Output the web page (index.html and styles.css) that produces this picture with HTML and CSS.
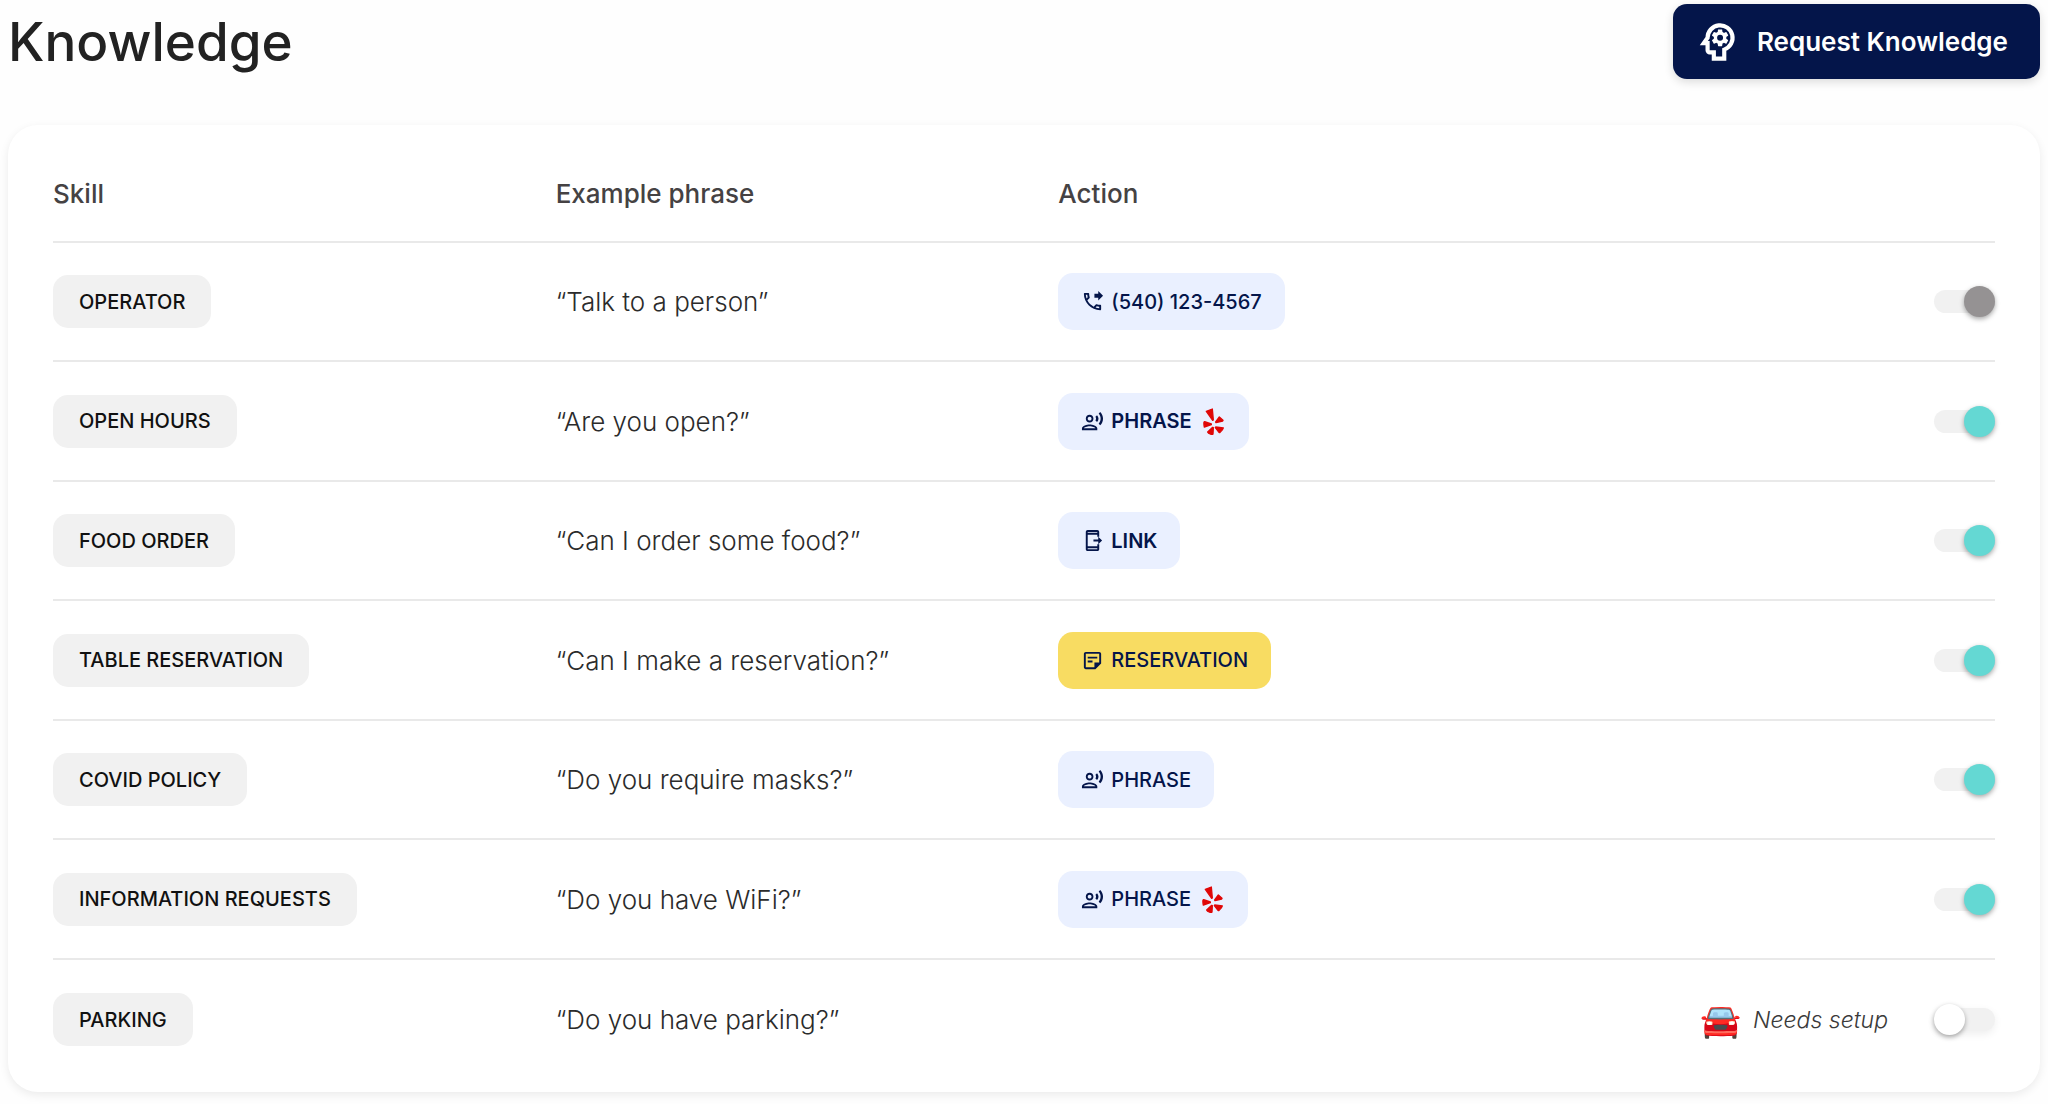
FILE: index.html
```html
<!DOCTYPE html>
<html lang="en">
<head>
    <meta charset="UTF-8">
    <meta name="viewport" content="width=device-width, initial-scale=1.0">
    <title>Knowledge</title>
    <link rel="stylesheet" href="styles.css">
</head>
<body>
    <!-- shared icons -->
    <svg class="sprite" aria-hidden="true">
        <symbol id="icon-forward" viewBox="0 0 24 24">
            <path d="M18 11l5-5-5-5v3h-4v4h4v3zM20 15.500c-1.250 0-2.450-.2-3.570-.57-.1-.03-.21-.05-.31-.05-.26 0-.51.1-.71.29l-2.200 2.200c-2.830-1.440-5.150-3.750-6.590-6.580l2.200-2.210c.28-.27.36-.66.25-1.010C8.700 6.450 8.500 5.250 8.500 4c0-.55-.45-1-1-1H4c-.55 0-1 .45-1 1 0 9.390 7.610 17 17 17 .55 0 1-.45 1-1v-3.500c0-.55-.45-1-1-1zM5.030 5h1.500c.07.88.22 1.750.46 2.590L5.790 8.800c-.41-1.210-.67-2.480-.76-3.800zM19 18.970c-1.320-.09-2.590-.35-3.800-.75l1.200-1.200c.85.24 1.720.39 2.600.45v1.500z"/>
        </symbol>
        <symbol id="icon-voice" viewBox="0 0 24 24">
            <path d="M9 13c2.210 0 4-1.790 4-4s-1.790-4-4-4-4 1.790-4 4 1.790 4 4 4zm0-6c1.100 0 2 .9 2 2s-.9 2-2 2-2-.9-2-2 .9-2 2-2zm0 8c-2.670 0-8 1.340-8 4v2h16v-2c0-2.660-5.330-4-8-4zm-6 4c.22-.72 3.310-2 6-2 2.700 0 5.800 1.290 6 2H3zM15.080 7.050c.84 1.180.84 2.710 0 3.890l1.680 1.690c2.020-2.020 2.020-5.070 0-7.270l-1.680 1.690zM20.070 2l-1.630 1.630c2.770 3.020 2.770 7.560 0 10.740L20.070 16c3.900-3.890 3.910-9.950 0-14z"/>
        </symbol>
        <symbol id="icon-mobile" viewBox="0 0 24 24">
            <path d="M17 18H7V6h10v2h2V3c0-1.100-.9-2-2-2H7c-1.100 0-2 .9-2 2v18c0 1.100.9 2 2 2h10c1.100 0 2-.9 2-2v-5h-2v2zm0 3H7v-1h10v1zM7 3h10v1H7V3zM22 12l-4-4v3h-5v2h5v3z"/>
        </symbol>
        <symbol id="icon-note" viewBox="0 0 24 24">
            <path d="M19 5v9h-5v5H5V5h14m0-2H5c-1.100 0-2 .9-2 2v14c0 1.100.9 2 2 2h10l6-6V5c0-1.100-.9-2-2-2zm-7 11H7v-2h5v2zm5-4H7V8h10v2z"/>
        </symbol>
        <symbol id="icon-yelp" viewBox="0 0 63 81">
            <path stroke-width="4" stroke-linejoin="round" d="M10 10L28 3L31 36L29 37ZM38 42L49 27L60 37L59 39L39 44ZM3 42Q2 49 4 57L25 50V48L5 41ZM38 57L61 60Q60 66 50 74L48 73L37 59ZM29 58L14 72Q15 77 28 80L30 78L31 59Z"/>
        </symbol>
    </svg>

    <div class="container">
        <header class="header">
            <h1>Knowledge</h1>
            <button class="button" type="button">
                <svg class="button-icon" viewBox="0 0 24 24" aria-hidden="true">
                    <path class="head" d="M10 20h5v-4.350A6 6 0 1 0 7 10L5.200 12.500H7V16a1 1 0 0 0 1 1h2z"/>
                    <path class="gear" fill-rule="evenodd" d="M13 8.570a1.430 1.430 0 1 0 0 2.860 1.430 1.430 0 0 0 0-2.860zM16 10c0 .13-.01.26-.02.39l.83.66c.08.06.1.16.05.25l-.8 1.390c-.05.09-.16.12-.24.09l-.99-.4c-.21.16-.43.29-.67.39L14 13.830c-.01.1-.1.17-.2.17h-1.600c-.1 0-.18-.07-.2-.17l-.15-1.060c-.25-.1-.47-.23-.68-.39l-.99.4c-.09.03-.2 0-.25-.09l-.8-1.390c-.05-.08-.03-.19.05-.25l.84-.66c-.01-.13-.02-.26-.02-.39s.02-.27.04-.39l-.85-.66c-.08-.06-.1-.16-.05-.26l.8-1.380c.05-.09.15-.12.24-.09l1 .4c.2-.15.43-.29.67-.39L12 6.170c.02-.1.1-.17.2-.17h1.600c.1 0 .18.07.2.17l.15 1.060c.24.1.46.23.67.39l1-.4c.09-.03.2 0 .24.09l.8 1.380c.05.09.03.2-.05.26l-.85.66c.03.12.04.25.04.39z"/>
                </svg>
                Request Knowledge
            </button>
        </header>

        <main class="card">
            <table class="skills">
                <colgroup>
                    <col>
                    <col>
                    <col>
                    <col class="col-status">
                </colgroup>
                <thead>
                    <tr>
                        <th scope="col">Skill</th>
                        <th scope="col">Example phrase</th>
                        <th scope="col">Action</th>
                        <td></td>
                    </tr>
                </thead>
                <tbody>
                    <tr>
                        <td><span class="skill">OPERATOR</span></td>
                        <td>“Talk to a person”</td>
                        <td><button class="action" type="button"><svg class="icon"><use href="#icon-forward"/></svg>(540) 123-4567</button></td>
                        <td><div class="status"><input class="toggle locked" type="checkbox" aria-label="Operator" checked disabled></div></td>
                    </tr>
                    <tr>
                        <td><span class="skill">OPEN HOURS</span></td>
                        <td>“Are you open?”</td>
                        <td><button class="action strong" type="button"><svg class="icon"><use href="#icon-voice"/></svg>PHRASE<svg class="yelp"><use href="#icon-yelp"/></svg></button></td>
                        <td><div class="status"><input class="toggle" type="checkbox" aria-label="Open hours" checked></div></td>
                    </tr>
                    <tr>
                        <td><span class="skill">FOOD ORDER</span></td>
                        <td>“Can I order some food?”</td>
                        <td><button class="action strong" type="button"><svg class="icon"><use href="#icon-mobile"/></svg>LINK</button></td>
                        <td><div class="status"><input class="toggle" type="checkbox" aria-label="Food order" checked></div></td>
                    </tr>
                    <tr>
                        <td><span class="skill">TABLE RESERVATION</span></td>
                        <td>“Can I make a reservation?”</td>
                        <td><button class="action yellow" type="button"><svg class="icon"><use href="#icon-note"/></svg>RESERVATION</button></td>
                        <td><div class="status"><input class="toggle" type="checkbox" aria-label="Table reservation" checked></div></td>
                    </tr>
                    <tr>
                        <td><span class="skill">COVID POLICY</span></td>
                        <td>“Do you require masks?”</td>
                        <td><button class="action" type="button"><svg class="icon"><use href="#icon-voice"/></svg>PHRASE</button></td>
                        <td><div class="status"><input class="toggle" type="checkbox" aria-label="Covid policy" checked></div></td>
                    </tr>
                    <tr>
                        <td><span class="skill">INFORMATION REQUESTS</span></td>
                        <td>“Do you have WiFi?”</td>
                        <td><button class="action" type="button"><svg class="icon"><use href="#icon-voice"/></svg>PHRASE<svg class="yelp"><use href="#icon-yelp"/></svg></button></td>
                        <td><div class="status"><input class="toggle" type="checkbox" aria-label="Information requests" checked></div></td>
                    </tr>
                    <tr>
                        <td><span class="skill">PARKING</span></td>
                        <td>“Do you have parking?”</td>
                        <td></td>
                        <td>
                            <div class="status">
                                <span class="car">🚘</span>
                                <label class="setup" for="parking">Needs setup</label>
                                <input class="toggle" type="checkbox" id="parking">
                            </div>
                        </td>
                    </tr>
                </tbody>
            </table>
        </main>
    </div>
</body>
</html>
```
FILE: styles.css
```css
* {
    box-sizing: border-box;
}
body {
    margin: 0;
    font-family: Inter, "Liberation Sans", sans-serif;
    background: #fefefe;
    color: #2b2b2b;
}
.sprite {
    position: absolute;
    width: 0;
    height: 0;
}
.container {
    padding: 4px 8px 12px;
}
.header {
    display: flex;
    justify-content: space-between;
    align-items: center;
    margin-bottom: 46px;
}
h1 {
    margin: 0;
    font-size: 53px;
    font-weight: 500;
    line-height: 72px;
    color: #222;
}
.button {
    display: flex;
    align-items: center;
    gap: 14px;
    height: 75px;
    padding: 0 32px 0 20px;
    border: none;
    border-radius: 14px;
    background: #04154a;
    box-shadow: 0 3px 10px rgba(0, 0, 0, 0.14);
    color: white;
    font-family: inherit;
    font-size: 26px;
    font-weight: 600;
    cursor: pointer;
}
.button-icon {
    width: 50px;
    height: 50px;
}
.head {
    fill: none;
    stroke: white;
    stroke-width: 2;
}
.gear {
    fill: white;
}
.card {
    padding: 20px 45px 13px;
    border-radius: 30px;
    background: white;
    box-shadow: 0 3px 10px rgba(0, 0, 0, 0.08);
}

/* table */
.skills {
    width: 100%;
    table-layout: fixed;
    border-collapse: separate;
    border-spacing: 0;
}
.col-status {
    width: 434px;
}
.skills th,
.skills td {
    height: 119px;
    padding: 0;
    border-bottom: 2px solid #e9e9e9;
    text-align: left;
    vertical-align: middle;
}
.skills tbody tr:nth-child(even) td {
    height: 120px;
}
.skills thead th,
.skills thead td {
    height: 98px;
}
.skills th {
    font-size: 26px;
    font-weight: 500;
    color: #454243;
}
.skills td {
    font-size: 26px;
    font-weight: 300;
}
.skills tbody tr:last-child td {
    border-bottom: none;
}
.skill,
.action {
    display: inline-flex;
    align-items: center;
    vertical-align: middle;
    border-radius: 15px;
    font-size: 20px;
    font-weight: 500;
}
.skill {
    height: 53px;
    padding: 0 26px;
    background: #f1f1f1;
    color: #111;
}
.action {
    gap: 7px;
    height: 57px;
    padding: 0 23px;
    border: none;
    background: #eaf0ff;
    color: #04154a;
    font-family: inherit;
    cursor: pointer;
}
.strong {
    font-weight: 600;
}
.yellow {
    background: #f8dc62;
}
.icon {
    width: 23px;
    height: 23px;
    fill: #04154a;
}
.yelp {
    width: 21px;
    height: 27px;
    margin: 0 2px 0 4px;
    fill: #e00707;
    stroke: #e00707;
}

/* right column */
.status {
    display: flex;
    justify-content: flex-end;
    align-items: center;
}
.car {
    margin-right: 12px;
    font-size: 33px;
    font-weight: 400;
    line-height: 40px;
}
.setup {
    margin-right: 46px;
    font-size: 23px;
    font-style: italic;
    color: #3a3a3a;
}
.toggle {
    appearance: none;
    display: flex;
    align-items: center;
    width: 61px;
    height: 23px;
    margin: 0;
    border-radius: 12px;
    background: #f1f1f1;
    cursor: pointer;
}
.toggle::before {
    content: "";
    width: 31px;
    height: 31px;
    border-radius: 50%;
    background: white;
    box-shadow: 0 2px 5px rgba(0, 0, 0, 0.35);
}
.toggle:checked {
    justify-content: flex-end;
}
.toggle:checked::before {
    background: #64d8d3;
}
.toggle.locked::before {
    background: #959293;
}
.toggle:not(:checked) {
    box-shadow: 0 3px 8px rgba(0, 0, 0, 0.07);
}
```
